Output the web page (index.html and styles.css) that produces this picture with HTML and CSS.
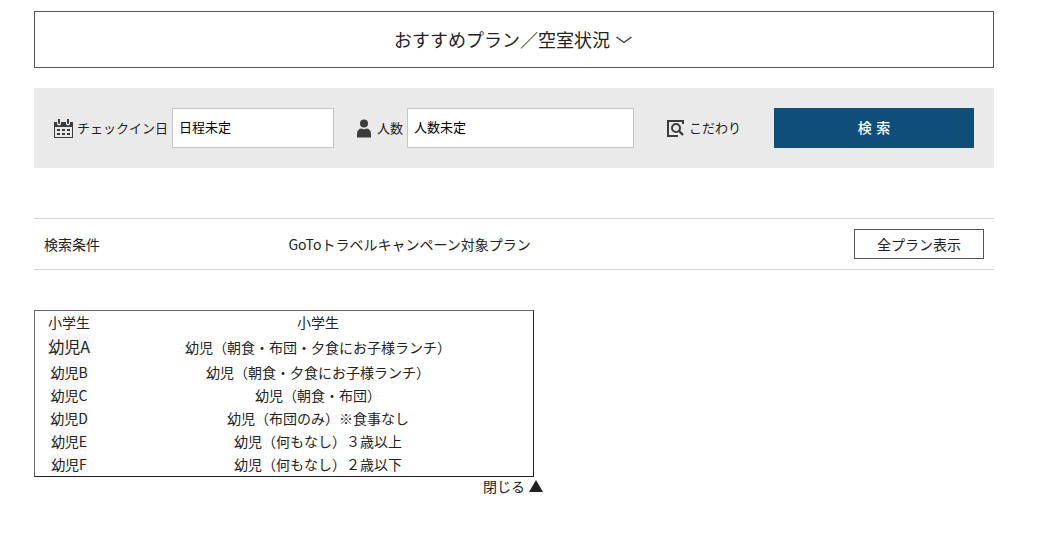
FILE: index.html
```html
<!DOCTYPE html>
<html lang="ja">
<head>
  <meta charset="UTF-8">
  <meta name="viewport" content="width=device-width, initial-scale=1.0">
  <title>おすすめプラン／空室状況</title>
  <link rel="stylesheet" href="styles.css">
</head>
<body>
  <main class="container">
    <button type="button" class="plan-toggle">
      おすすめプラン／空室状況
      <svg width="18" height="10" viewBox="0 0 18 10"><path d="M0.5 2L8 7.5L15.5 2" fill="none" stroke="#333" stroke-width="1.3"/></svg>
    </button>

    <form class="search">
      <div class="field field-date">
        <svg class="icon" width="19" height="19" viewBox="0 0 19 19">
          <path d="M0 3H3V4.5A2 2 0 0 0 7 4.5V3H12V4.5A2 2 0 0 0 16 4.5V3H19V19H0ZM1 8V18H18V8Z" fill="#3c3c3c" fill-rule="evenodd"/>
          <path d="M4 0H6V4A1 1 0 0 1 4 4ZM13 0H15V4A1 1 0 0 1 13 4Z" fill="#3c3c3c"/>
          <path d="M3 10H6V12H3ZM8 10H11V12H8ZM13 10H16V12H13ZM3 14H6V16H3ZM8 14H11V16H8ZM13 14H16V16H13Z" fill="#3c3c3c"/>
        </svg>
        <label for="checkin">チェックイン日</label>
        <input type="text" id="checkin" value="日程未定">
      </div>
      <div class="field field-people">
        <svg class="icon" width="14" height="19" viewBox="0 0 14 19">
          <circle cx="7" cy="4.5" r="4" fill="#3c3c3c"/>
          <path d="M0 18.5V15Q0 10 4.5 9.5Q7 11 9.5 9.5Q14 10 14 15V18.5Z" fill="#3c3c3c"/>
        </svg>
        <label for="people">人数</label>
        <input type="text" id="people" value="人数未定">
      </div>
      <button type="button" class="option">
        <svg class="icon" width="18" height="19" viewBox="0 0 18 19">
          <path d="M16 5V2H1V17H11" fill="none" stroke="#3c3c3c" stroke-width="2"/>
          <circle cx="9" cy="9" r="4" fill="none" stroke="#3c3c3c" stroke-width="2"/>
          <path d="M12 12L16 16" stroke="#3c3c3c" stroke-width="2.4"/>
        </svg>
        こだわり
      </button>
      <button type="submit" class="submit">検&emsp13;索</button>
    </form>

    <section class="condition">
      <h2>検索条件</h2>
      <p>GoToトラベルキャンペーン対象プラン</p>
      <a href="#" class="show-all">全プラン表示</a>
    </section>

    <div class="ages">
      <table>
        <tr><td>小学生</td><td>小学生</td></tr>
        <tr class="large"><td><span>幼児A</span></td><td>幼児（朝食・布団・夕食にお子様ランチ）</td></tr>
        <tr><td><span>幼児B</span></td><td>幼児（朝食・夕食にお子様ランチ）</td></tr>
        <tr><td><span>幼児C</span></td><td>幼児（朝食・布団）</td></tr>
        <tr><td><span>幼児D</span></td><td>幼児（布団のみ）※食事なし</td></tr>
        <tr><td><span>幼児E</span></td><td>幼児（何もなし）３歳以上</td></tr>
        <tr><td><span>幼児F</span></td><td>幼児（何もなし）２歳以下</td></tr>
      </table>
      <a href="#" class="close">閉じる
        <svg width="14" height="12" viewBox="0 0 14 12"><path d="M7 0L14 12H0Z" fill="#222"/></svg>
      </a>
    </div>
  </main>
</body>
</html>
```

FILE: styles.css
```css
* {
  box-sizing: border-box;
}

body {
  margin: 0;
  font-family: "Noto Sans CJK JP", sans-serif;
  font-size: 14px;
  line-height: 20px;
  color: #222;
  background: #fff;
}

button, input {
  font-family: inherit;
  color: inherit;
}

a {
  color: inherit;
  text-decoration: none;
}

.container {
  padding: 11px 44px 0 34px;
}

.plan-toggle {
  display: flex;
  justify-content: center;
  align-items: center;
  gap: 6px;
  width: 100%;
  padding: 15px;
  font-size: 18px;
  line-height: 25px;
  background: #fff;
  border: 1px solid #555;
  cursor: pointer;
}

.search {
  display: flex;
  align-items: center;
  margin-top: 20px;
  padding: 20px;
  background: #eaeaea;
}

.field {
  display: flex;
  align-items: center;
  font-size: 13px;
}

.field-date {
  flex: 1 1 280px;
}

.field-people {
  flex: 1 1 277px;
  margin-left: 23px;
}

.icon {
  flex: none;
  margin-right: 4px;
}

.field-people .icon {
  margin-right: 6px;
}

.field label {
  flex: none;
  margin-right: 4px;
}

.field input {
  flex: 1;
  min-width: 0;
  height: 40px;
  padding: 0 6px 4px;
  font-size: 13px;
  color: #000;
  background: #fff;
  border: 1px solid #c4c4c4;
  border-radius: 0;
}

.option {
  display: flex;
  align-items: center;
  margin: 0 33px;
  padding: 0;
  font-size: 13px;
  line-height: 20px;
  background: none;
  border: none;
  cursor: pointer;
}

.submit {
  width: 200px;
  height: 40px;
  padding: 0 0 2px;
  font-size: 14px;
  font-weight: 500;
  color: #fff;
  background: #104e7a;
  border: none;
  cursor: pointer;
}

.condition {
  display: flex;
  align-items: center;
  margin-top: 50px;
  padding: 10px;
  border-top: 1px solid #d0d0d0;
  border-bottom: 1px solid #d0d0d0;
}

.condition h2 {
  width: 26%;
  margin: 0;
  font-size: 14px;
  font-weight: normal;
}

.condition p {
  flex: 1;
  margin: 0;
}

.show-all {
  width: 130px;
  padding: 4px;
  text-align: center;
  border: 1px solid #555;
}

.ages {
  max-width: 509px;
  margin-top: 40px;
}

.ages table {
  width: 500px;
  border: 1px solid;
  border-color: #666 #222 #222 #666;
  border-spacing: 0;
  text-align: center;
}

.ages td {
  height: 23px;
  padding: 0 1px 2px;
}

.ages td:first-child {
  width: 68px;
}

.ages .large td {
  height: 27px;
}

.ages .large span {
  font-size: 16px;
}

.ages span {
  background: #f7f7f7;
}

.close {
  display: flex;
  justify-content: flex-end;
  align-items: center;
  gap: 4px;
  line-height: 18px;
}
```
